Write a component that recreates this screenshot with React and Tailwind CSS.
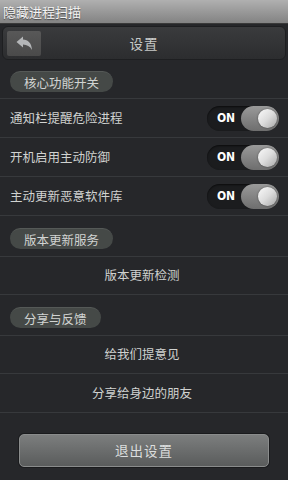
import React from 'react'

const font = { fontFamily: '"Noto Sans CJK SC", "Noto Sans", sans-serif' }

const Pill = ({ label }) => (
  <div className="h-[21px] px-[14px] rounded-full bg-[#454947] text-[#d2d4d2] text-[12.5px] leading-[21px] inline-block border-t border-[#555957]">
    {label}
  </div>
)

const Section = ({ label, first }) => (
  <div className={`${first ? 'pt-[8px] pb-[5px]' : 'pt-[10px] pb-[6px]'} pl-[10px] border-b border-[#37393c]`}>
    <Pill label={label} />
  </div>
)

const Toggle = () => (
  <div className="flex items-center h-[25px] w-[72px] rounded-full bg-[#1b1c1e] pl-[10px] shadow-[inset_0_1px_2px_rgba(0,0,0,0.6)]">
    <span className="text-white text-[12px] font-bold tracking-tight" style={{ fontFamily: '"DejaVu Sans Condensed", "Liberation Sans", sans-serif' }}>ON</span>
    <div className="ml-auto h-[25px] w-[38px] rounded-full bg-gradient-to-b from-[#9a9a9a] to-[#6e6e6e] flex items-center justify-end pr-[2px]">
      <div className="w-[19px] h-[19px] rounded-full bg-gradient-to-br from-[#fafafa] via-[#dcdcdc] to-[#a8a8a8] shadow-[0_0_2px_rgba(0,0,0,0.5)]" />
    </div>
  </div>
)

const ToggleRow = ({ label }) => (
  <div className="h-[39px] flex items-center justify-between pl-[10px] pr-[9px] border-b border-[#37393c]">
    <span className="text-[#d0d2d0] text-[12.5px]">{label}</span>
    <Toggle />
  </div>
)

const LinkRow = ({ label, tall }) => (
  <div className={`${tall ? 'h-[39px]' : 'h-[38px]'} flex items-center justify-center pr-[4px] border-b border-[#37393c]`}>
    <span className="text-[#d0d2d0] text-[12.5px]">{label}</span>
  </div>
)

const App = () => {
  return (
    <div className="w-[288px] h-[480px] overflow-hidden flex flex-col bg-[#26272a]" style={font}>
      <div className="h-[24px] shrink-0 bg-gradient-to-b from-[#b0b0b0] to-[#838383] flex items-center pl-[3px] border-b border-[#3a3a3a]">
        <span className="text-[#f4f4f4] text-[13px] [text-shadow:0_1px_1px_rgba(0,0,0,0.5)]">隐藏进程扫描</span>
      </div>

      <div className="pt-[2px] px-[2px] pb-[1px]">
        <div className="h-[34px] rounded-[6px] bg-gradient-to-b from-[#3a3b3d] to-[#2c2d2f] border border-[#1e1f21] flex items-center pl-[4px] relative">
          <div className="w-[34px] h-[25px] rounded-[2px] bg-gradient-to-b from-[#585858] to-[#4a4a4a] flex items-center justify-center">
            <svg width="17" height="15" viewBox="0 0 17 15">
              <path d="M0.5 6 L7 0.5 L7 3.6 C12 3.8 15.5 7 16 14 C14 10.5 11 8.8 7 8.6 L7 11.6 Z" fill="#b4b6b8" />
            </svg>
          </div>
          <span className="absolute left-0 right-0 text-center text-[#c8cac8] text-[13.5px] tracking-[1px] pointer-events-none">设置</span>
        </div>
      </div>

      <Section label="核心功能开关" first />
      <ToggleRow label="通知栏提醒危险进程" />
      <ToggleRow label="开机启用主动防御" />
      <ToggleRow label="主动更新恶意软件库" />

      <Section label="版本更新服务" />
      <LinkRow label="版本更新检测" />

      <Section label="分享与反馈" />
      <LinkRow label="给我们提意见" />
      <LinkRow label="分享给身边的朋友" tall />

      <div className="flex-1 flex items-end justify-center pb-[13px]">
        <div className="w-[250px] h-[33px] rounded-[5px] bg-gradient-to-b from-[#7c7e7e] to-[#5a5c5c] border border-[#8a8c8c] shadow-[0_0_0_1px_#1a1b1d] flex items-center justify-center">
          <span className="text-[#dcdede] text-[13.5px] tracking-[1px]">退出设置</span>
        </div>
      </div>
    </div>
  )
}

export default App
